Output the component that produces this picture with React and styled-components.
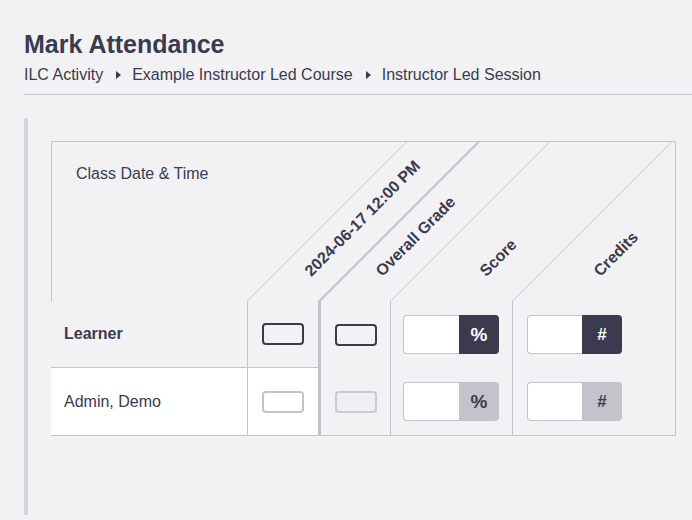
import React from 'react';
import styled, { createGlobalStyle } from 'styled-components';

const ink = '#3b3a4e';
const line = '#c4c3cb';

const GlobalStyle = createGlobalStyle`
    body {
        margin: 0;
        background: #f2f2f4;
        font-family: "Liberation Sans", Arial, sans-serif;
        color: ${ink};
    }
`

const PageHeader = styled.header`
    margin-left: 24px;
    padding: 29px 0 9px;
    border-bottom: 1px solid ${line};
`

const Title = styled.h1`
    margin: 0;
    font-size: 25px;
    line-height: 30px;
    font-weight: 700;
`

const Crumbs = styled.nav`
    display: flex;
    align-items: center;
    margin-top: 6px;
    font-size: 16px;
    line-height: 20px;
`

const CrumbArrow = styled.span`
    width: 0;
    height: 0;
    margin: 0 11px 0 13px;
    border-left: 5px solid ${ink};
    border-top: 4px solid transparent;
    border-bottom: 4px solid transparent;
`

const Section = styled.section`
    margin: 23px 0 0 24px;
    padding: 23px 16px 79px 23px;
    border-left: 4px solid #d5d4da;
`

const Table = styled.div`
    display: grid;
    grid-template-columns: 196px 71px 72px 122px 1fr;
    grid-template-rows: 159px 67px 67px;
    border: 1px solid ${line};
    border-left: none;
    overflow: hidden;
`

const CornerCell = styled.div`
    border-left: 1px solid ${line};
    padding: 22px 24px;
    font-size: 16px;
    line-height: 20px;
`

const SlantCell = styled.div`
    display: flex;
    align-items: flex-end;
    padding: 0 0 21px ${p => p.$labelX}px;
    border-left: ${p => p.$thick ? 3 : 1}px solid ${line};
    transform: skewX(-45deg);
    transform-origin: 0 100%;
`

const SlantLabel = styled.span`
    font-size: 16px;
    line-height: 18px;
    font-weight: 700;
    white-space: nowrap;
    transform: skewX(45deg) rotate(-45deg);
    transform-origin: 0 100%;
`

const NameCell = styled.div`
    display: flex;
    align-items: center;
    padding-left: 13px;
    font-size: 16px;
    font-weight: ${p => p.$head ? 700 : 400};
    background: ${p => p.$head ? 'transparent' : '#fff'};
    border-bottom: ${p => p.$head ? `1px solid ${line}` : 'none'};
`

const Cell = styled.div`
    display: flex;
    align-items: center;
    justify-content: ${p => p.$start ? 'flex-start' : 'center'};
    padding-left: ${p => p.$pad || 0}px;
    border-left: ${p => p.$thick ? 3 : 1}px solid ${line};
    background: ${p => p.$white ? '#fff' : 'transparent'};
    border-bottom: ${p => p.$split ? `1px solid ${line}` : 'none'};
`

const Toggle = styled.span`
    box-sizing: border-box;
    width: 42px;
    height: 22px;
    border-radius: 4px;
    border: 2px solid ${p => p.$active ? ink : p.$disabled ? '#cacad0' : line};
    background: ${p => p.$active ? 'transparent' : p.$disabled ? '#f0f0f2' : '#fff'};
`

const InputGroup = styled.div`
    display: flex;
    height: 39px;
`

const Field = styled.span`
    width: ${p => p.$w}px;
    box-sizing: border-box;
    background: #fff;
    border: 1px solid ${line};
    border-right: none;
    border-radius: 4px 0 0 4px;
`

const Addon = styled.span`
    display: flex;
    align-items: center;
    justify-content: center;
    width: 40px;
    border-radius: 0 4px 4px 0;
    font-size: ${p => p.$size}px;
    font-weight: 700;
    background: ${p => p.$active ? ink : line};
    color: ${p => p.$active ? '#fff' : ink};
`

const columns = [
    { label: '2024-06-17 12:00 PM', labelX: 45 },
    { label: 'Overall Grade', labelX: 43, thick: true },
    { label: 'Score', labelX: 77 },
    { label: 'Credits', labelX: 69 },
]

const App = () => {
    return (
        <>
            <GlobalStyle />
            <PageHeader>
                <Title>Mark Attendance</Title>
                <Crumbs>
                    <span>ILC Activity</span>
                    <CrumbArrow />
                    <span>Example Instructor Led Course</span>
                    <CrumbArrow />
                    <span>Instructor Led Session</span>
                </Crumbs>
            </PageHeader>
            <Section>
                <Table>
                    <CornerCell>Class Date &amp; Time</CornerCell>
                    {columns.map(col => (
                        <SlantCell key={col.label} $labelX={col.labelX} $thick={col.thick}>
                            <SlantLabel>{col.label}</SlantLabel>
                        </SlantCell>
                    ))}

                    <NameCell $head>Learner</NameCell>
                    <Cell $split><Toggle $active /></Cell>
                    <Cell $thick><Toggle $active /></Cell>
                    <Cell $start $pad={12}>
                        <InputGroup>
                            <Field $w={56} />
                            <Addon $active $size={19}>%</Addon>
                        </InputGroup>
                    </Cell>
                    <Cell $start $pad={14}>
                        <InputGroup>
                            <Field $w={55} />
                            <Addon $active $size={17}>#</Addon>
                        </InputGroup>
                    </Cell>

                    <NameCell>Admin, Demo</NameCell>
                    <Cell $white><Toggle /></Cell>
                    <Cell $thick><Toggle $disabled /></Cell>
                    <Cell $start $pad={12}>
                        <InputGroup>
                            <Field $w={56} />
                            <Addon $size={19}>%</Addon>
                        </InputGroup>
                    </Cell>
                    <Cell $start $pad={14}>
                        <InputGroup>
                            <Field $w={55} />
                            <Addon $size={17}>#</Addon>
                        </InputGroup>
                    </Cell>
                </Table>
            </Section>
        </>
    )
}

export default App;
